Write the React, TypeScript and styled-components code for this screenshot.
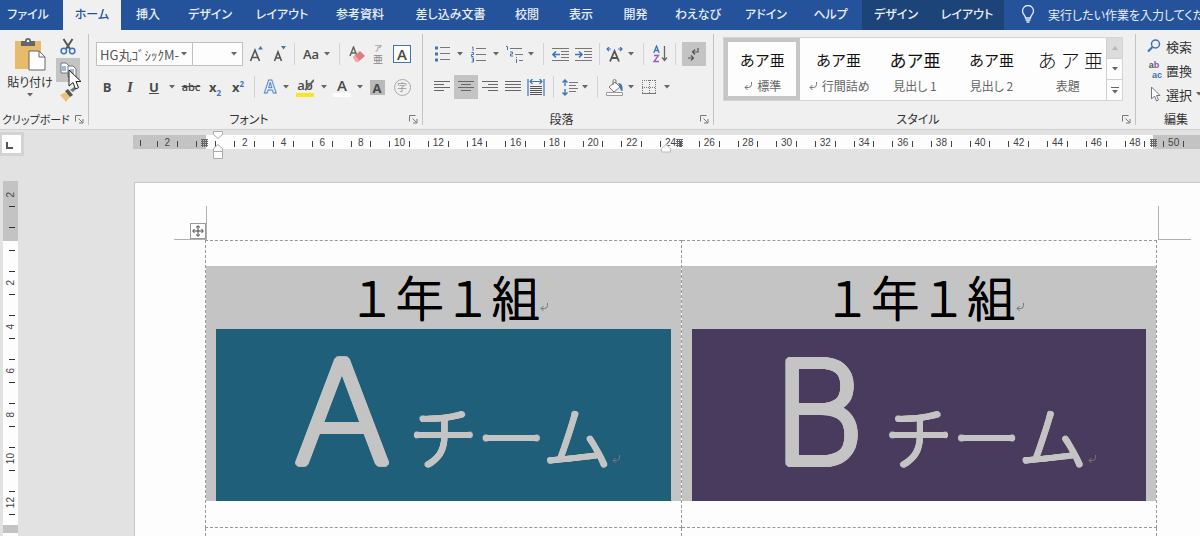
import React from 'react';
import styled, { createGlobalStyle, css } from 'styled-components';

const GlobalStyle = createGlobalStyle`
  *, *::before, *::after { box-sizing: border-box; }
  html, body { margin: 0; height: 100%; }
  body {
    overflow: hidden;
    background: #e2e2e2;
    color: #333;
    font-family: "Noto Sans CJK JP", "Liberation Sans", sans-serif;
    font-size: 13px;
    font-feature-settings: "palt";
  }
  #root { height: 100%; }
  button, input, select { font: inherit; font-feature-settings: inherit; color: inherit; }
  svg { display: block; flex: none; }
`;

const ui = {
  blue: '#24539b',
  blueDark: '#1d4479',
  ribbon: '#f0f0f0',
  pressed: '#c4c4c4',
  line: '#d0d0d0',
  ink: '#4a4a4a',
  accent: '#3f74b5',
};

/* A disc of unblurred shadows, which thickens a thin face with round stroke ends. */
const roundStroke = (r: number) => {
  const dots: string[] = [];
  for (let x = -r; x <= r; x++) {
    for (let y = -r; y <= r; y++) {
      if ((x || y) && x * x + y * y <= r * r + 1) dots.push(`${x}px ${y}px 0 currentColor`);
    }
  }
  return dots.join(', ');
};

const Window = styled.div`
  display: flex;
  flex-direction: column;
  height: 100%;
  min-height: 100vh;
`;

/* ---------- tab strip ---------- */

const TabBar = styled.nav`
  display: flex;
  height: 30px;
  background: ${ui.blue};
  color: #e9eef6;
  font-size: 12px;
`;

const Tab = styled.button<{ $w: number; $active?: boolean; $context?: boolean; $file?: boolean }>`
  flex: 0 0 ${(p) => p.$w}px;
  border: 0;
  padding: 0 ${(p) => (p.$file ? 7 : 0)}px 2px 0;
  line-height: 20px;
  white-space: nowrap;
  font-weight: 500;
  background: ${(p) => (p.$active ? ui.ribbon : p.$context ? ui.blueDark : 'transparent')};
  color: ${(p) => (p.$active ? ui.blue : '#e9eef6')};
`;

const TellMe = styled.label`
  display: flex;
  flex: 1;
  align-items: center;
  gap: 13px;
  min-width: 0;
  padding: 0 0 2px 17px;
`;

const TellMeInput = styled.input`
  flex: 1;
  min-width: 0;
  border: 0;
  padding: 0;
  outline: 0;
  background: transparent;
  &::placeholder { color: #e9eef6; opacity: 1; }
`;

/* ---------- ribbon ---------- */

const Ribbon = styled.div`
  display: flex;
  height: 100px;
  flex: none;
  padding-top: 4px;
  background: ${ui.ribbon};
  border-bottom: 1px solid ${ui.line};
`;

const Group = styled.section<{ $w?: number; $last?: boolean }>`
  display: flex;
  flex-direction: column;
  ${(p) => (p.$w ? css`flex: 0 0 ${p.$w}px;` : css`flex: 1;`)}
  min-width: 0;
  margin-bottom: 4px;
  border-right: ${(p) => (p.$last ? '0' : `1px solid ${ui.pressed}`)};
`;

const GroupBody = styled.div<{ $pad?: number }>`
  display: flex;
  flex: 1;
  min-height: 0;
  padding-left: ${(p) => p.$pad ?? 0}px;
`;

const GroupFooter = styled.footer<{ $start?: boolean }>`
  display: flex;
  flex: none;
  align-items: center;
  height: 20px;
  padding: 0 4px 0 ${(p) => (p.$start ? 2 : 0)}px;
  margin-bottom: -4px;
`;

const GroupName = styled.span<{ $start?: boolean }>`
  flex: 1;
  font-size: ${(p) => (p.$start ? 11 : 12)}px;
  line-height: 20px;
  text-align: ${(p) => (p.$start ? 'left' : 'center')};
  white-space: nowrap;
`;

const IconButton = styled.button`
  display: flex;
  border: 0;
  padding: 0;
  background: transparent;
`;

const ToolRows = styled.div`
  display: flex;
  flex-direction: column;
  gap: 9px;
  padding-top: 8px;
`;

const ToolRow = styled.div`
  display: flex;
  align-items: center;
  height: 24px;
`;

const Tool = styled.button<{ $w: number; $on?: boolean }>`
  display: flex;
  flex: 0 0 ${(p) => p.$w}px;
  align-items: center;
  justify-content: center;
  height: 24px;
  border: 0;
  padding: 0;
  background: ${(p) => (p.$on ? ui.pressed : 'transparent')};
`;

const Divider = styled.span<{ $w: number }>`
  display: flex;
  flex: 0 0 ${(p) => p.$w}px;
  justify-content: center;
  height: 22px;
  &::before { content: ''; width: 1px; background: #d2d2d2; }
`;

const ComboBox = styled.label<{ $w: number }>`
  position: relative;
  display: flex;
  flex: 0 0 ${(p) => p.$w}px;
  align-items: center;
  height: 24px;
  border: 1px solid #c0c0c0;
  background: #fdfdfd;
  & + & { border-left: 0; }
  svg { position: absolute; right: 5px; pointer-events: none; }
`;

const ComboSelect = styled.select`
  width: 100%;
  height: 22px;
  border: 0;
  padding: 0 0 0 3px;
  appearance: none;
  background: transparent;
  color: #555;
`;

const PasteArea = styled.div`
  display: flex;
  flex-direction: column;
  width: 56px;
  padding-top: 4px;
`;

const PasteButton = styled.button`
  display: flex;
  flex-direction: column;
  align-items: center;
  border: 0;
  padding: 0 0 0 4px;
  background: transparent;
  font-size: 12px;
  line-height: 22px;
  white-space: nowrap;
`;

const ClipColumn = styled.div`
  display: flex;
  flex-direction: column;
  width: 24px;
  button:last-child { height: 26px; }
`;

const PointerMark = styled.svg`
  position: absolute;
  z-index: 2;
  left: 68px;
  top: 69px;
`;

const Gallery = styled.div`
  display: flex;
  flex: 1;
  height: 64px;
  margin: 3px 12px 0 0;
  border: 1px solid #d4d4d4;
  background: #fdfdfd;
  overflow: hidden;
`;

const StyleCard = styled.button<{ $on?: boolean }>`
  display: flex;
  flex: 1;
  flex-direction: column;
  align-items: center;
  justify-content: flex-end;
  gap: 4px;
  min-width: 0;
  overflow: hidden;
  border: 4px solid ${(p) => (p.$on ? '#c6c6c6' : 'transparent')};
  padding: 0;
  background: #fdfdfd;
`;

const Sample = styled.span<{ $size: number; $spaced?: boolean }>`
  font-size: ${(p) => p.$size}px;
  line-height: 24px;
  height: 24px;
  color: #111;
  white-space: nowrap;
  font-feature-settings: normal;
  ${(p) => p.$spaced && css`align-self: flex-start; padding-left: 4px; font-weight: 300;`}
`;

const CardName = styled.span`
  display: flex;
  align-items: center;
  gap: 4px;
  font-size: 12px;
  line-height: 20px;
  color: #666;
  white-space: nowrap;
`;

const GalleryScroll = styled.div`
  display: flex;
  flex: 0 0 16px;
  flex-direction: column;
  border-left: 1px solid ${ui.line};
`;

const ScrollButton = styled.button<{ $dim?: boolean }>`
  display: flex;
  flex: 1;
  align-items: center;
  justify-content: center;
  border: 0;
  padding: 0;
  background: ${(p) => (p.$dim ? '#dcdcdc' : '#fdfdfd')};
  & + & { border-top: 1px solid ${ui.line}; }
`;

const EditList = styled.div`
  display: flex;
  flex-direction: column;
`;

const EditButton = styled.button`
  display: flex;
  align-items: center;
  gap: 4px;
  height: 24px;
  border: 0;
  padding: 0;
  background: transparent;
  white-space: nowrap;
`;

/* ---------- rulers and document ---------- */

const RulerRow = styled.div`
  display: flex;
  flex: none;
  height: 52px;
`;

const TabStop = styled.button`
  width: 24px;
  height: 24px;
  margin-top: 2px;
  border: 3px solid #d3d3d3;
  border-left-width: 2px;
  padding: 4px 0 0 4px;
  background: #fdfdfd;
`;

const Ruler = styled.div`
  position: relative;
  display: flex;
  flex: 1;
  height: 14px;
  margin: 5px 0 0 109px;
  padding-right: 7px;
  background: linear-gradient(to right, #c3c3c3 73px, #fdfdfd 73px, #fdfdfd calc(100% - 47px), #c3c3c3 calc(100% - 47px));
`;

const RulerCells = styled.div`
  display: grid;
  flex: 1;
  grid-template-columns: repeat(27, 1fr);
`;

const RulerLead = styled.span`
  display: flex;
  flex: 0 0 15px;
  align-items: center;
  justify-content: center;
`;

const RulerCell = styled.span`
  display: flex;
  align-items: center;
  justify-content: space-between;
  padding: 0 9px;
  font: 10px/15px "Liberation Sans", sans-serif;
  color: #444;
`;

const Tick = styled.i`
  width: 1px;
  height: 6px;
  margin-top: 2px;
  background: #444;
`;

const RulerMark = styled.svg<{ $x: string; $y: number }>`
  position: absolute;
  left: ${(p) => p.$x};
  top: ${(p) => p.$y}px;
`;

const Workspace = styled.div`
  display: flex;
  flex: 1;
  min-height: 0;
`;

const SideRuler = styled.div`
  flex: 0 0 15px;
  margin: -1px 0 0 3px;
  overflow: hidden;
  background: linear-gradient(to bottom, #c3c3c3 60px, #fdfdfd 60px, #fdfdfd 344px, #c3c3c3 344px, #c3c3c3 352px, #fdfdfd 352px);
`;

const SideCells = styled.div`
  display: flex;
  flex-direction: column;
  margin-top: -8px;
`;

const SideTick = styled.i`
  width: 6px;
  height: 1px;
  margin-left: 3px;
  background: #333;
`;

const SideCell = styled.span`
  display: flex;
  flex-direction: column;
  align-items: center;
  justify-content: space-between;
  height: 44px;
  padding: 10px 0;
  font: 10px/14px "Liberation Sans", sans-serif;
  color: #444;
  &:first-child > ${SideTick}:first-child { visibility: hidden; }
`;

const SideNumber = styled.span`
  writing-mode: vertical-rl;
  rotate: 180deg;
`;

const Page = styled.main`
  flex: 1;
  min-width: 0;
  margin-left: 116px;
  border: solid #c6c6c6;
  border-width: 1px 0 0 1px;
  background: #fdfdfd;
  overflow: hidden;
`;

const CropMarks = styled.div`
  display: flex;
  align-items: flex-end;
  justify-content: space-between;
  height: 57px;
  padding: 0 9px 0 39px;
`;

const Corner = styled.div<{ $side: 'left' | 'right' }>`
  display: flex;
  align-items: flex-end;
  justify-content: flex-end;
  width: 33px;
  height: 34px;
  border-bottom: 1px solid #b0b0b0;
  border-${(p) => (p.$side === 'left' ? 'right' : 'left')}: 1px solid #b0b0b0;
`;

const MoveHandle = styled.button`
  display: flex;
  align-items: center;
  justify-content: center;
  width: 16px;
  height: 16px;
  border: 1px solid #999;
  padding: 0;
  background: #fdfdfd;
`;

const SheetTable = styled.table`
  width: calc(100% - 113px);
  margin-left: 70px;
  border-collapse: collapse;
  table-layout: fixed;
`;

const SheetCell = styled.td`
  height: 287px;
  border: 1px dashed #999;
  padding: 0 0 2px;
  vertical-align: middle;
`;

const Selection = styled.div`
  display: flex;
  flex-direction: column;
  height: 235px;
  padding: 0 10px;
  background: #c4c4c4;
`;

const ClassName = styled.h2`
  display: flex;
  align-items: center;
  justify-content: center;
  height: 63px;
  margin: 0;
  padding-bottom: 4px;
  color: #000;
  font-size: 48px;
  font-weight: 300;
  line-height: 60px;
  font-feature-settings: normal;
  text-shadow: 1px 0 0 currentColor, 0 1px 0 currentColor, 1px 1px 0 currentColor;
`;

const ReturnSlot = styled.span<{ $drop: number }>`
  display: flex;
  width: 0;
  margin-top: ${(p) => p.$drop}px;
`;

const TeamPanel = styled.div<{ $color: string }>`
  display: flex;
  align-items: baseline;
  justify-content: center;
  height: 172px;
  background: ${(p) => p.$color};
  color: #c4c4c4;
  white-space: nowrap;
`;

const TeamLetter = styled.span`
  width: 134px;
  text-align: center;
  font: 200 142px/172px "DejaVu Sans", sans-serif;
  text-shadow: ${roundStroke(3)};
`;

const TeamWord = styled.span`
  font-size: 68px;
  line-height: 100px;
  font-weight: 100;
  font-feature-settings: normal;
  text-shadow: ${roundStroke(2)};
`;

/* ---------- icons ---------- */

const Caret = ({ color = '#666' }: { color?: string }) => (
  <svg width="6" height="4" viewBox="0 0 6 4"><path d="M0 0h6L3 3.6z" fill={color} /></svg>
);

const Launcher = () => (
  <svg width="9" height="9" viewBox="0 0 9 9" fill="none" stroke="#777">
    <path d="M.5 6.5v-6h6M3.5 3.5l4 4M8 4v4H4" />
  </svg>
);

const PasteIcon = () => (
  <svg width="32" height="33" viewBox="0 0 32 33">
    <path d="M1 3h26v28H1z" fill="#e8bb6a" />
    <path d="M7 3h4a3 3 0 0 1 6 0h4v5H7z" fill="#666" />
    <circle cx="14" cy="3" r="1.3" fill="#eee" />
    <path d="M15 13h10l6 6v13H15z" fill="#fdfdfd" stroke="#666" />
    <path d="M25 13v6h6" fill="none" stroke="#666" />
  </svg>
);

const CutIcon = () => (
  <svg width="16" height="17" viewBox="0 0 16 17" fill="none">
    <path d="M3.5 1l6.5 10M12.5 1L6 11" stroke="#555" strokeWidth="2" />
    <circle cx="3.8" cy="13" r="2.7" stroke={ui.accent} strokeWidth="1.5" />
    <circle cx="12.2" cy="13" r="2.7" stroke={ui.accent} strokeWidth="1.5" />
  </svg>
);

const CopyIcon = () => (
  <svg width="17" height="16" viewBox="0 0 17 16">
    <path d="M1 1h5l3 3v7H1z" fill="#fff" stroke="#777" />
    <path d="M3 4v5M5 4v5" stroke={ui.accent} />
    <path d="M8 4h5l3 3v8H8z" fill="#fff" stroke="#777" />
    <path d="M10 8h4M10 10h4M10 12h4" stroke={ui.accent} />
  </svg>
);

const BrushIcon = () => (
  <svg width="16" height="15" viewBox="0 0 16 15">
    <path d="M0 8l6-3 4 5-4 5z" fill="#eac27c" />
    <path d="M5 4l3-2 5 6-3 2z" fill="#555" />
    <path d="M10 3l4-3 2 2-3 3z" fill="#777" />
  </svg>
);

const Glyph = styled.span<{ $size: number; $bold?: boolean; $italic?: boolean; $under?: boolean; $strike?: boolean }>`
  font-family: "Open Sans", "Liberation Sans", sans-serif;
  font-size: ${(p) => p.$size}px;
  font-weight: ${(p) => (p.$bold ? 700 : 600)};
  font-style: ${(p) => (p.$italic ? 'italic' : 'normal')};
  text-decoration: ${(p) => (p.$under ? 'underline' : p.$strike ? 'line-through' : 'none')};
  line-height: 16px;
  color: ${ui.ink};
  sub, sup { font-size: 8px; line-height: 0; color: ${ui.accent}; }
`;

const SerifItalic = styled(Glyph)`font-family: "Liberation Serif", serif;`;

const Boxed = styled(Glyph)<{ $fill?: boolean }>`
  width: ${(p) => (p.$fill ? 15 : 18)}px;
  height: ${(p) => (p.$fill ? 15 : 18)}px;
  border: ${(p) => (p.$fill ? '0' : `1px solid ${ui.accent}`)};
  background: ${(p) => (p.$fill ? '#b9b9b9' : '#fdfdfd')};
  text-align: center;
`;

const Circled = styled.span`
  width: 17px;
  height: 17px;
  border: 1px solid #aaa;
  border-radius: 50%;
  color: #999;
  font-size: 10px;
  line-height: 14px;
  text-align: center;
`;

const Ruby = styled.span`
  display: flex;
  flex-direction: column;
  align-items: center;
  color: #888;
  font-size: 10px;
  line-height: 12px;
  small { font-size: 8px; line-height: 10px; }
`;

const Outlined = styled(Glyph)`
  color: #fdfdfd;
  -webkit-text-stroke: 1px #4b86c6;
`;

const Marked = styled.span<{ $bar: string }>`
  display: flex;
  flex-direction: column;
  align-items: center;
  width: 18px;
  border-bottom: 4px solid ${(p) => p.$bar};
  position: relative;
  svg { position: absolute; right: 0; top: 2px; }
`;

const GrowIcon = ({ up }: { up?: boolean }) => (
  <svg width="15" height="16" viewBox="0 0 15 16">
    <path d={up ? 'M1.5 15L6 4l4.5 11M3 11.5h6' : 'M2.5 15L6 6l3.5 9M4 12h4'} fill="none" stroke="#555" strokeWidth="1.6" />
    <path d={up ? 'M9 3.5h5L11.5 0z' : 'M9 0h5l-2.500 3.500z'} fill={ui.accent} />
  </svg>
);

const EraserIcon = () => (
  <svg width="16" height="17" viewBox="0 0 16 17">
    <path d="M1 10L4.500 1 8 10M2.200 7h4.500" fill="none" stroke="#666" strokeWidth="1.500" />
    <path d="M4 11l7-6 5 5-7 6H7z" fill="#df7a80" />
    <path d="M4 11l2-1.700 4.500 5L9 16H7z" fill="#f0a9ab" />
  </svg>
);

const Lines = ({ rows, w = 16 }: { rows: [number, number][]; w?: number }) => (
  <svg width={w} height="14" viewBox={`0 0 ${w} 14`}>
    {rows.map(([x, len], i) => <path key={i} d={`M${x} ${i * 3 + 1.5}h${len}`} stroke="#666" />)}
  </svg>
);

const BulletsIcon = () => (
  <svg width="15" height="16" viewBox="0 0 15 16">
    {[2, 8, 14].map((y) => (
      <g key={y}>
        <rect x="0" y={y - 1.5} width="3" height="3" fill={ui.accent} />
        <path d={`M5 ${y - .5}h10`} stroke="#777" />
      </g>
    ))}
  </svg>
);

const NumbersIcon = () => (
  <svg width="15" height="17" viewBox="0 0 15 17" fill="none">
    <path d="M1 1h1v4M.5 6.500h2v2h-2v2h2M.5 12h2v4h-2M1 14h1.500" stroke={ui.accent} />
    <path d="M5 2.500h10M5 8.500h10M5 14.500h10" stroke="#777" />
  </svg>
);

const OutlineIcon = () => (
  <svg width="17" height="17" viewBox="0 0 17 17" fill="none">
    <path d="M0 .5h1.500V4M4 6h2.500v2H4.500v2H7M10.500 11v1M10.500 13v4" stroke={ui.accent} />
    <path d="M4 2.500h12M9 8.500h8M13 14.500h4" stroke="#777" />
  </svg>
);

const IndentIcon = ({ out }: { out?: boolean }) => (
  <svg width="17" height="15" viewBox="0 0 17 15" fill="none">
    <path d="M0 1.500h17M9 4.500h8M9 7.500h8M9 10.500h8M0 13.500h17" stroke="#777" />
    <path d={out ? 'M8 7.500H1M4 4.500l-3 3 3 3' : 'M0 7.500h7M4 4.500l3 3-3 3'} stroke={ui.accent} strokeWidth="1.600" />
  </svg>
);

const ScaleIcon = () => (
  <svg width="17" height="15" viewBox="0 0 17 15" fill="none">
    <path d="M4 14.500L8.500 4 13 14.500M5.500 11h6" stroke="#555" strokeWidth="1.800" />
    <path d="M5 2H1M3 0L1 2l2 2M12 2h4M14 0l2 2-2 2" stroke={ui.accent} strokeWidth="1.200" />
  </svg>
);

const SortIcon = () => (
  <svg width="15" height="18" viewBox="0 0 15 18" fill="none">
    <path d="M.8 8L3.500 1l2.700 7M1.700 5.500h3.600" stroke={ui.accent} strokeWidth="1.300" />
    <path d="M1 10.500h4.500L1 16.500h5" stroke="#a05ab5" strokeWidth="1.300" />
    <path d="M11.500 1v14M9 12.500l2.500 3 2.500-3" stroke="#666" strokeWidth="1.300" />
  </svg>
);

const MarksIcon = () => (
  <svg width="14" height="15" viewBox="0 0 14 15" fill="none" stroke="#555" strokeWidth="1.200">
    <path d="M11 1v4H6M8 2.500L5.500 5 8 7.500M1 11h5M4 8.500L6.500 11 4 13.500" />
  </svg>
);

const DistributeIcon = () => (
  <svg width="18" height="17" viewBox="0 0 18 17" fill="none">
    <path d="M1 0v17M17 0v17M3 2.500h12M5.500 0L3 2.500 5.500 5M12.500 0L15 2.500 12.500 5" stroke={ui.accent} strokeWidth="1.200" />
    <path d="M3 7.500h12M3 9.500h12M3 11.500h12M3 13.500h12M3 15.500h12" stroke="#555" />
  </svg>
);

const SpacingIcon = () => (
  <svg width="16" height="17" viewBox="0 0 16 17" fill="none">
    <path d="M3 1v6M3 10v6M.5 3.500L3 1l2.500 2.500M.5 13.500L3 16l2.500-2.500" stroke={ui.accent} strokeWidth="1.400" />
    <path d="M7 3.500h9M7 6.500h7M7 9.500h9M7 12.500h7" stroke="#777" />
  </svg>
);

const BucketIcon = () => (
  <svg width="18" height="17" viewBox="0 0 18 17">
    <path d="M3 8l6-5 5 5-6 5z" fill="#fdfdfd" stroke="#777" />
    <path d="M7 6V2a1.500 1.500 0 0 1 3 0v3" fill="none" stroke="#777" />
    <path d="M12 4c4 0 5 3 4.500 8-2 0-2.500-2-2.500-4z" fill={ui.accent} />
    <path d="M.5 13.500h16v3H.5z" fill="#fdfdfd" stroke="#999" />
  </svg>
);

const BordersIcon = () => (
  <svg width="14" height="14" viewBox="0 0 14 14" fill="none">
    <path d="M.5 0v13M13.500 0v13M0 .5h14M7.500 0v13M0 7.500h14" stroke="#777" strokeDasharray="1 1" />
    <path d="M0 13.500h14" stroke="#777" />
  </svg>
);

const BulbIcon = () => (
  <svg width="14" height="18" viewBox="0 0 14 18" fill="none" stroke="#e9eef6" strokeWidth="1.300">
    <path d="M4.500 13c0-3-3-3.500-3-7a5.500 5.500 0 0 1 11 0c0 3.500-3 4-3 7zM4.500 15h5M5.500 17h3" />
  </svg>
);

const FindIcon = () => (
  <svg width="16" height="14" viewBox="0 0 16 14" fill="none" stroke={ui.accent}>
    <circle cx="9.500" cy="5" r="4" strokeWidth="1.500" /><path d="M6.500 8L2 12.500" strokeWidth="2.200" />
  </svg>
);

const ReplaceIcon = styled.span`
  display: flex;
  flex-direction: column;
  width: 16px;
  font: 700 9px/10px "Liberation Sans", sans-serif;
  color: #555;
  b { color: #8a56a8; }
`;

const ReplaceTarget = styled.span`
  text-align: right;
  color: ${ui.accent};
`;

const ArrowIcon = () => (
  <svg width="16" height="16" viewBox="0 0 16 16">
    <path d="M5.500 1v12l3-3 2 5 2-1-2-4.500h3.500z" fill="#fdfdfd" stroke="#777" />
  </svg>
);

const ReturnIcon = ({ color }: { color: string }) => (
  <svg width="10" height="9" viewBox="0 0 10 9" fill="none" stroke={color}>
    <path d="M8.500 0v2.500q0 3-3 3H2M4.500 3L2 5.500 4.500 8" />
  </svg>
);

const CrossIcon = () => (
  <svg width="12" height="12" viewBox="0 0 12 12" fill="none" stroke="#444">
    <path d="M6 1v10M1 6h10M4 2.500L6 .700l2 1.800M4 9.500l2 1.800 2-1.800M2.500 4L.700 6l1.800 2M9.500 4l1.800 2-1.800 2" />
  </svg>
);

const ColumnMark = ({ x }: { x: string }) => (
  <RulerMark $x={x} $y={4} width="7" height="8" viewBox="0 0 7 8" fill="none" stroke="#666">
    <path d="M0 .5h7M0 2.500h7M0 4.500h7M0 6.500h7M1.500 0v8M3.500 0v8M5.500 0v8" />
  </RulerMark>
);

/* ---------- pieces ---------- */

const TABS: { name: string; w: number; active?: boolean; context?: boolean; file?: boolean }[] = [
  { name: 'ファイル', w: 63, file: true },
  { name: 'ホーム', w: 58, active: true },
  { name: '挿入', w: 54 },
  { name: 'デザイン', w: 70 },
  { name: 'レイアウト', w: 74 },
  { name: '参考資料', w: 82 },
  { name: '差し込み文書', w: 99 },
  { name: '校閲', w: 54 },
  { name: '表示', w: 54 },
  { name: '開発', w: 55 },
  { name: 'わえなび', w: 70 },
  { name: 'アドイン', w: 66 },
  { name: 'ヘルプ', w: 63 },
  { name: 'デザイン', w: 68, context: true },
  { name: 'レイアウト', w: 74, context: true },
];

const STYLES = [
  { name: '標準', sample: 'あア亜', size: 15, mark: true, on: true },
  { name: '行間詰め', sample: 'あア亜', size: 15, mark: true },
  { name: '見出し 1', sample: 'あア亜', size: 17 },
  { name: '見出し 2', sample: 'あア亜', size: 15 },
  { name: '表題', sample: 'あ ア 亜', size: 19, spaced: true },
];

const TEAMS = [
  { letter: 'A', color: '#1f5f79' },
  { letter: 'B', color: '#493b5e' },
];

const Menu = ({ w, label }: { w: number; label: string }) => (
  <Tool $w={w} aria-label={label}><Caret /></Tool>
);

const Footer = ({ name, start, plain }: { name: string; start?: boolean; plain?: boolean }) => (
  <GroupFooter $start={start}>
    <GroupName $start={start}>{name}</GroupName>
    {!plain && <IconButton aria-label={`${name}の詳細`}><Launcher /></IconButton>}
  </GroupFooter>
);

const ClipboardGroup = () => (
  <Group $w={89}>
    <GroupBody>
      <PasteArea>
        <PasteButton><PasteIcon /><span>貼り付け</span><Caret /></PasteButton>
      </PasteArea>
      <ClipColumn>
        <Tool $w={24} aria-label="切り取り"><CutIcon /></Tool>
        <Tool $w={24} $on aria-label="コピー"><CopyIcon /></Tool>
        <Tool $w={24} aria-label="書式のコピー"><BrushIcon /></Tool>
      </ClipColumn>
    </GroupBody>
    <Footer name="クリップボード" start />
  </Group>
);

const FontGroup = () => (
  <Group $w={334}>
    <GroupBody $pad={7}>
      <ToolRows>
        <ToolRow>
          <ComboBox $w={97}>
            <ComboSelect aria-label="フォント名"><option>HG丸ｺﾞｼｯｸM-</option></ComboSelect>
            <Caret />
          </ComboBox>
          <ComboBox $w={50}>
            <ComboSelect aria-label="フォントサイズ"><option> </option></ComboSelect>
            <Caret />
          </ComboBox>
          <Tool $w={26} aria-label="拡大"><GrowIcon up /></Tool>
          <Tool $w={20} aria-label="縮小"><GrowIcon /></Tool>
          <Divider $w={10} />
          <Tool $w={24}><Glyph $size={13}>Aa</Glyph></Tool>
          <Menu w={8} label="文字種の変換" />
          <Divider $w={16} />
          <Tool $w={20} aria-label="書式のクリア"><EraserIcon /></Tool>
          <Tool $w={22}><Ruby><small>ア</small>亜</Ruby></Tool>
          <Tool $w={26}><Boxed $size={15}>A</Boxed></Tool>
        </ToolRow>
        <ToolRow>
          <Tool $w={22}><Glyph $size={13} $bold>B</Glyph></Tool>
          <Tool $w={24}><SerifItalic $size={15} $bold $italic>I</SerifItalic></Tool>
          <Tool $w={24}><Glyph $size={13} $bold $under>U</Glyph></Tool>
          <Menu w={12} label="下線" />
          <Tool $w={26}><Glyph $size={11} $strike>abc</Glyph></Tool>
          <Tool $w={22}><Glyph $size={13} $bold>x<sub>2</sub></Glyph></Tool>
          <Tool $w={24}><Glyph $size={13} $bold>x<sup>2</sup></Glyph></Tool>
          <Divider $w={8} />
          <Tool $w={24}><Outlined $size={17} $bold>A</Outlined></Tool>
          <Menu w={8} label="文字の効果" />
          <Tool $w={30}>
            <Marked $bar="#f8e71c">
              <Glyph $size={13}>ab</Glyph>
              <svg width="10" height="12" viewBox="0 0 10 12"><path d="M10 1L3 9l-2 2" stroke="#666" strokeWidth="2" fill="none" /></svg>
            </Marked>
          </Tool>
          <Menu w={8} label="蛍光ペンの色" />
          <Tool $w={28}><Marked $bar="#fdfdfd"><Glyph $size={15}>A</Glyph></Marked></Tool>
          <Menu w={8} label="フォントの色" />
          <Tool $w={26}><Boxed $size={13} $bold $fill>A</Boxed></Tool>
          <Tool $w={24}><Circled>字</Circled></Tool>
        </ToolRow>
      </ToolRows>
    </GroupBody>
    <Footer name="フォント" />
  </Group>
);

const ParagraphGroup = () => (
  <Group $w={291}>
    <GroupBody $pad={7}>
      <ToolRows>
        <ToolRow>
          <Tool $w={24} aria-label="箇条書き"><BulletsIcon /></Tool>
          <Menu w={12} label="行頭文字" />
          <Tool $w={24} aria-label="段落番号"><NumbersIcon /></Tool>
          <Menu w={12} label="番号の書式" />
          <Tool $w={24} aria-label="アウトライン"><OutlineIcon /></Tool>
          <Menu w={10} label="リストの変更" />
          <Divider $w={14} />
          <Tool $w={20} aria-label="インデントを減らす"><IndentIcon out /></Tool>
          <Tool $w={26} aria-label="インデントを増やす"><IndentIcon /></Tool>
          <Divider $w={6} />
          <Tool $w={25} aria-label="拡張書式"><ScaleIcon /></Tool>
          <Menu w={8} label="拡張書式の種類" />
          <Divider $w={17} />
          <Tool $w={17} aria-label="並べ替え"><SortIcon /></Tool>
          <Divider $w={13} />
          <Tool $w={24} $on aria-label="編集記号の表示"><MarksIcon /></Tool>
        </ToolRow>
        <ToolRow>
          <Tool $w={24} aria-label="左揃え"><Lines rows={[[0, 16], [0, 10], [0, 16], [0, 10]]} /></Tool>
          <Tool $w={24} $on aria-label="中央揃え"><Lines rows={[[0, 16], [3, 10], [0, 16], [3, 10]]} /></Tool>
          <Tool $w={24} aria-label="右揃え"><Lines rows={[[0, 16], [6, 10], [0, 16], [6, 10]]} /></Tool>
          <Tool $w={22} aria-label="両端揃え"><Lines rows={[[0, 16], [0, 16], [0, 16], [0, 16]]} /></Tool>
          <Tool $w={24} aria-label="均等割り付け"><DistributeIcon /></Tool>
          <Divider $w={10} />
          <Tool $w={23} aria-label="行と段落の間隔"><SpacingIcon /></Tool>
          <Menu w={8} label="間隔の種類" />
          <Divider $w={17} />
          <Tool $w={18} aria-label="塗りつぶし"><BucketIcon /></Tool>
          <Menu w={14} label="塗りつぶしの色" />
          <Tool $w={22} aria-label="罫線"><BordersIcon /></Tool>
          <Menu w={14} label="罫線の種類" />
        </ToolRow>
      </ToolRows>
    </GroupBody>
    <Footer name="段落" />
  </Group>
);

const StylesGroup = () => (
  <Group>
    <GroupBody $pad={9}>
      <Gallery>
        {STYLES.map((s) => (
          <StyleCard key={s.name} $on={s.on}>
            <Sample $size={s.size} $spaced={s.spaced}>{s.sample}</Sample>
            <CardName>{s.mark && <ReturnIcon color="#777" />}{s.name}</CardName>
          </StyleCard>
        ))}
        <GalleryScroll>
          <ScrollButton $dim aria-label="上へ"><svg width="6" height="4"><path d="M0 4h6L3 0z" fill="#b5b5b5" /></svg></ScrollButton>
          <ScrollButton aria-label="下へ"><Caret /></ScrollButton>
          <ScrollButton aria-label="その他">
            <svg width="8" height="7"><path d="M0 .5h8" stroke="#666" /><path d="M1 3h6L4 6.600z" fill="#666" /></svg>
          </ScrollButton>
        </GalleryScroll>
      </Gallery>
    </GroupBody>
    <Footer name="スタイル" />
  </Group>
);

const EditGroup = () => (
  <Group $w={64} $last>
    <GroupBody $pad={10}>
      <EditList>
        <EditButton><FindIcon />検索</EditButton>
        <EditButton>
          <ReplaceIcon><span>a<b>b</b></span><ReplaceTarget>ac</ReplaceTarget></ReplaceIcon>
          置換
        </EditButton>
        <EditButton><ArrowIcon />選択<Caret /></EditButton>
      </EditList>
    </GroupBody>
    <GroupFooter>
      <EditName>編集</EditName>
    </GroupFooter>
  </Group>
);

const EditName = styled(GroupName)`
  padding-left: 28px;
  text-align: left;
`;

const topNumbers = ['2', '', ...Array.from({ length: 25 }, (_, i) => String((i + 1) * 2))];
const sideNumbers = ['2', '', '2', '4', '6', '8', '10', '12'];

const TopRuler = () => (
  <RulerRow>
    <TabStop aria-label="タブの種類">
      <svg width="8" height="8" viewBox="0 0 8 8"><path d="M1 0v6h6" fill="none" stroke="#555" strokeWidth="2" /></svg>
    </TabStop>
    <Ruler>
      <RulerLead><Tick /></RulerLead>
      <RulerCells>
        {topNumbers.map((n, i) => <RulerCell key={i}><Tick />{n}<Tick /></RulerCell>)}
      </RulerCells>
      <ColumnMark x="68px" />
      <ColumnMark x="calc(51% - 1px)" />
      <ColumnMark x="calc(100% - 50px)" />
      <RulerMark $x="80px" $y={-4} width="10" height="9" fill="#fdfdfd" stroke="#aaa"><path d="M.5.5h9v3l-4.500 4-4.500-4z" /></RulerMark>
      <RulerMark $x="80px" $y={9} width="10" height="15" fill="#fdfdfd" stroke="#aaa"><path d="M.5 14.500v-10l4.500-4 4.500 4v10zM.5 7.500h9" /></RulerMark>
      <RulerMark $x="calc(50% - 6px)" $y={9} width="10" height="9" fill="#fdfdfd" stroke="#bbb"><path d="M.5 8v-3.500l4.500-4 4.500 4V8z" /></RulerMark>
    </Ruler>
  </RulerRow>
);

export default function App() {
  return (
    <Window>
      <GlobalStyle />
      <TabBar>
        {TABS.map((t, i) => (
          <Tab key={i} $w={t.w} $active={t.active} $context={t.context} $file={t.file}>{t.name}</Tab>
        ))}
        <TellMe>
          <BulbIcon />
          <TellMeInput aria-label="操作アシスト" placeholder="実行したい作業を入力してください" />
        </TellMe>
      </TabBar>
      <Ribbon>
        <ClipboardGroup />
        <FontGroup />
        <ParagraphGroup />
        <StylesGroup />
        <EditGroup />
      </Ribbon>
      <PointerMark width="14" height="22" viewBox="0 0 14 22">
        <path d="M1 1v16l4-3.500L7.500 20l3-1.300L8 12.500h5z" fill="#fff" stroke="#222" />
      </PointerMark>
      <TopRuler />
      <Workspace>
        <SideRuler>
          <SideCells>
            {sideNumbers.map((n, i) => (
              <SideCell key={i}><SideTick /><SideNumber>{n}</SideNumber><SideTick /></SideCell>
            ))}
          </SideCells>
        </SideRuler>
        <Page>
          <CropMarks>
            <Corner $side="left"><MoveHandle aria-label="表の移動"><CrossIcon /></MoveHandle></Corner>
            <Corner $side="right" />
          </CropMarks>
          <SheetTable>
            <tbody>
              <tr>
                {TEAMS.map((t) => (
                  <SheetCell key={t.letter}>
                    <Selection>
                      <ClassName>１年１組<ReturnSlot $drop={24}><ReturnIcon color="#777" /></ReturnSlot></ClassName>
                      <TeamPanel $color={t.color}>
                        <TeamLetter>{t.letter}</TeamLetter>
                        <TeamWord>チーム</TeamWord>
                        <ReturnSlot $drop={0}><ReturnIcon color="#777" /></ReturnSlot>
                      </TeamPanel>
                    </Selection>
                  </SheetCell>
                ))}
              </tr>
              <tr><SheetCell /><SheetCell /></tr>
            </tbody>
          </SheetTable>
        </Page>
      </Workspace>
    </Window>
  );
}
